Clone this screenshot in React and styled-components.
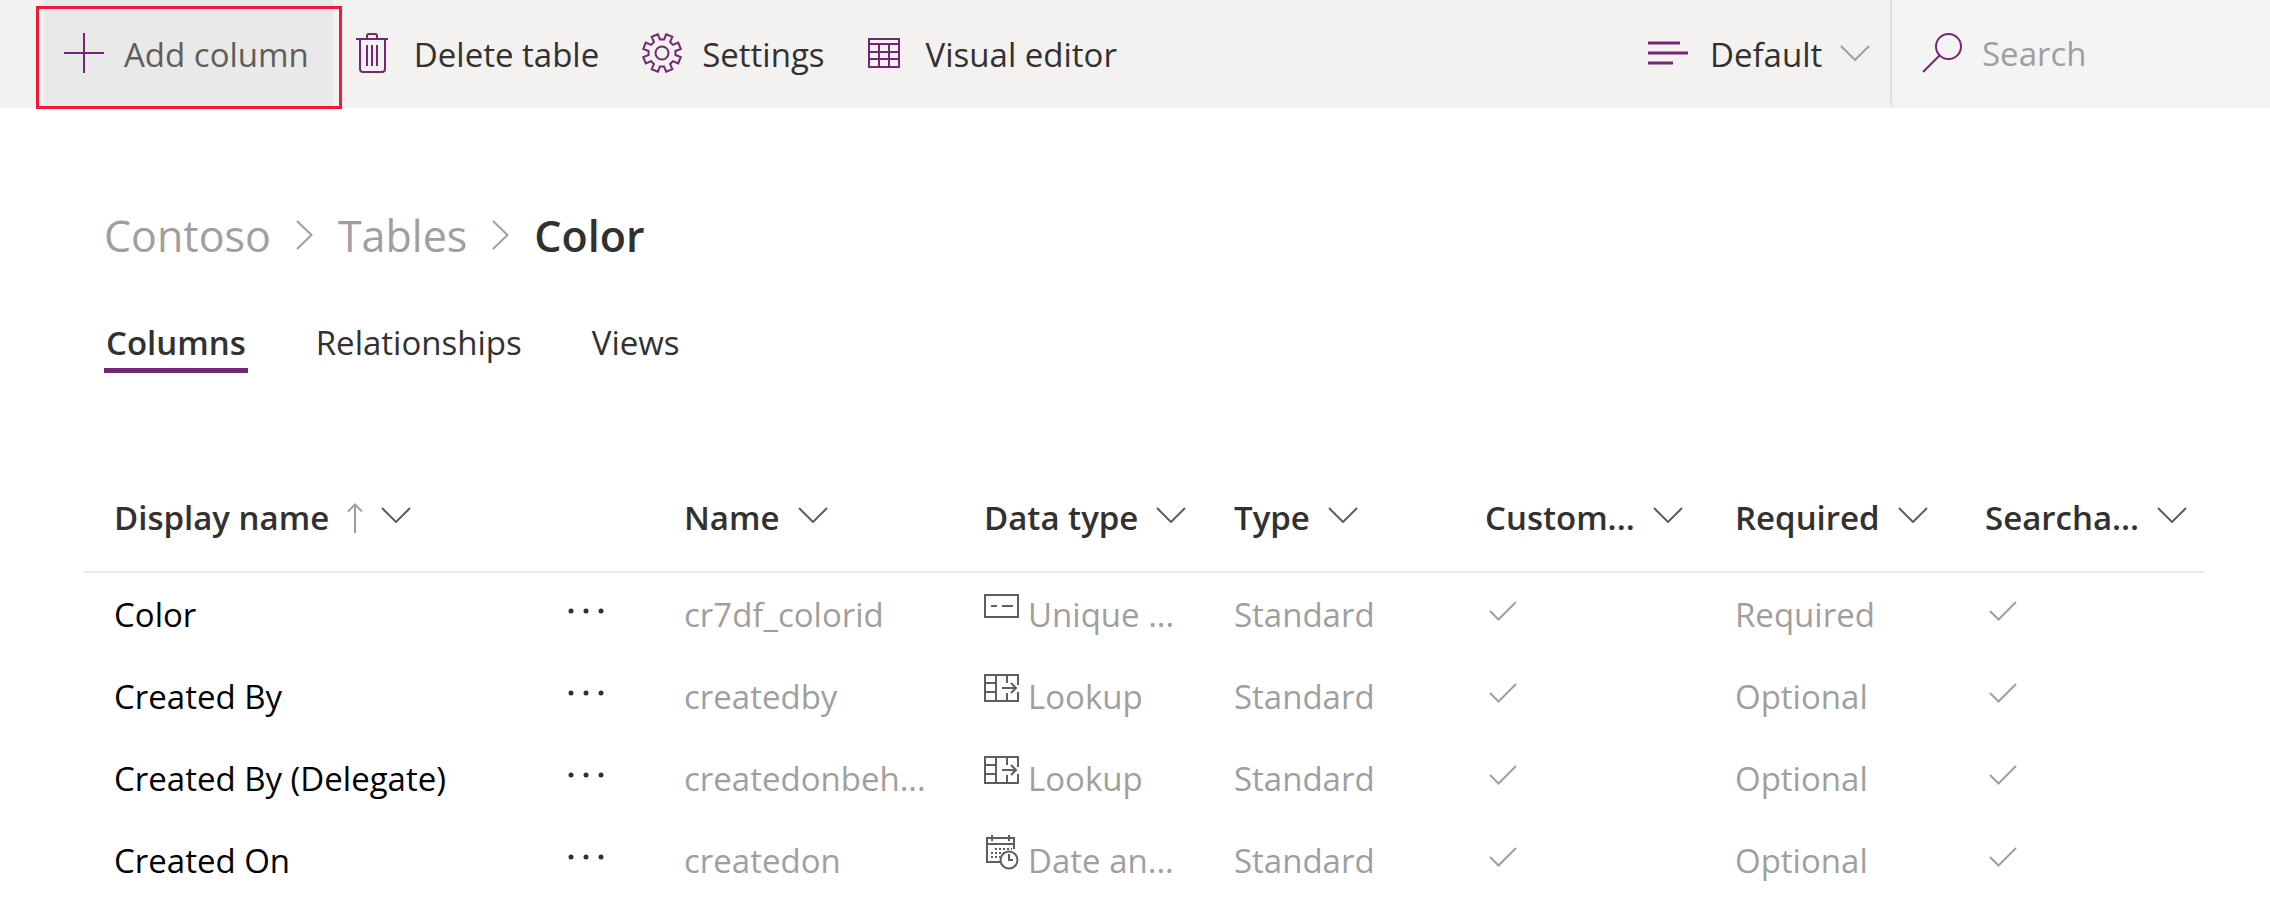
import React from "react";
import styled, { createGlobalStyle, css } from "styled-components";

const purple = "#742774";
const ink = "#323130";
const muted = "#a19f9d";

const GlobalStyle = createGlobalStyle`
  *, *::before, *::after { box-sizing: border-box; }
  body {
    margin: 0;
    background: #fff;
    color: ${ink};
    font-family: "Segoe UI", "Open Sans", "Noto Sans", sans-serif;
    font-size: 33px;
    line-height: 46px;
  }
  button, input, select { font: inherit; color: inherit; }
  svg { display: block; flex: none; }
`;

/* Icons */

const Svg = styled.svg.attrs({ "aria-hidden": true, fill: "none" })`
  stroke: ${(p) => p.$color || purple};
  stroke-width: ${(p) => p.$weight || 2}px;
  ${(p) => p.$raise && css`margin-bottom: ${p.$raise}px;`}
`;

const PlusIcon = () => (
  <Svg width="40" height="40" viewBox="0 0 40 40" $raise={4}>
    <path d="M20 0V40M0 20H40" />
  </Svg>
);

const TrashIcon = () => (
  <Svg width="32" height="40" viewBox="0 0 32 40" $raise={4}>
    <path d="M0 6H32M11 6V3Q11 1 13 1H19Q21 1 21 3V6M4 6V36Q4 39 7 39H26Q29 39 29 36V6M11 12V33M16 12V33M21 12V33" />
  </Svg>
);

const gearOutline = Array.from({ length: 8 }, (_, k) =>
  [[-14, 13.6], [-10, 19.2], [10, 19.2], [14, 13.6]]
    .map(([offset, radius]) => {
      const a = ((22.5 + 45 * k + offset) * Math.PI) / 180;
      return `${(20 + radius * Math.sin(a)).toFixed(2)},${(20 - radius * Math.cos(a)).toFixed(2)}`;
    })
    .join(" ")
).join(" ");

const GearIcon = () => (
  <Svg width="40" height="40" viewBox="0 0 40 40" $raise={4}>
    <polygon points={gearOutline} />
    <circle cx="20" cy="20" r="6.5" />
  </Svg>
);

const GridIcon = () => (
  <Svg width="32" height="30" viewBox="0 0 32 30" $raise={4}>
    <path d="M1 1H31V29H1ZM1 6H31M1 14H31M1 21H31M11 6V29M21 6V29" />
  </Svg>
);

const ViewIcon = () => (
  <Svg width="40" height="24" viewBox="0 0 40 24" $weight={3} $raise={4}>
    <path d="M0 2H32M0 12H40M0 22H25" />
  </Svg>
);

const SearchIcon = () => (
  <Svg width="40" height="40" viewBox="0 0 40 40" $raise={2}>
    <circle cx="26.500" cy="13.500" r="12.500" />
    <path d="M17.500 22.500L1 39" />
  </Svg>
);

const ChevronDown = ({ color = "#605e5c", raise }) => (
  <Svg width="30" height="16" viewBox="0 0 30 16" $color={color} $raise={raise}>
    <path d="M1 1L15 15L29 1" />
  </Svg>
);

const ChevronRight = () => (
  <Svg width="17" height="30" viewBox="0 0 17 30" $color={muted} $raise={2}>
    <path d="M1 1L15.500 15L1 29" />
  </Svg>
);

const SortUpIcon = () => (
  <Svg width="16" height="30" viewBox="0 0 16 30" $color={muted}>
    <path d="M8 30V1.500M1 8.500L8 1.500L15 8.500" />
  </Svg>
);

const MoreIcon = () => (
  <Svg width="36" height="6" viewBox="0 0 36 6" $color="none" $raise={8}>
    <g fill={ink}>
      <circle cx="3" cy="3" r="2.500" />
      <circle cx="18" cy="3" r="2.500" />
      <circle cx="33" cy="3" r="2.500" />
    </g>
  </Svg>
);

const UniqueIcon = () => (
  <Svg width="36" height="36" viewBox="0 0 36 36" $color="#605e5c" $raise={18}>
    <path d="M1 7H34V29H1ZM7 18H13M18 18H29" />
  </Svg>
);

const LookupIcon = () => (
  <Svg width="36" height="36" viewBox="0 0 36 36" $color="#605e5c" $raise={18}>
    <path d="M34 15V5H1V31H34V22M12 5V31M1 13H12M1 22H12M23 5V13M23 23V31M18 18H32M27 13L32 18L27 23" />
  </Svg>
);

const DateIcon = () => (
  <Svg width="36" height="36" viewBox="0 0 36 36" $color="#605e5c" $raise={18}>
    <path d="M17 28H3V4H30V15M3 10H30M8 1V7M25 1V7" />
    <path d="M11 15H28M7 19H20M7 23H16" strokeDasharray="2 2" />
    <circle cx="25" cy="26" r="8.500" />
    <path d="M25 20V26H29" />
  </Svg>
);

const CheckIcon = () => (
  <Svg width="28" height="20" viewBox="0 0 28 20" $color={muted} $raise={8}>
    <path d="M1 10L9.500 18.500L27 1" />
  </Svg>
);

/* Command bar */

const CommandBar = styled.header`
  display: flex;
  height: 108px;
  padding-left: 44px;
  background: #f3f2f1;
`;

const CommandButton = styled.button`
  position: relative;
  display: flex;
  align-items: center;
  gap: ${(p) => p.$gap || 20}px;
  padding: 2px ${(p) => (p.$hovered ? 24 : 20)}px 0 20px;
  border: 0;
  background: ${(p) => (p.$hovered ? "#e9e9e9" : "transparent")};
  color: ${(p) => (p.$hovered ? "#605e5c" : ink)};
  white-space: nowrap;
`;

const Callout = styled.span`
  position: absolute;
  inset: 6px -9px -1px -8px;
  border: 3px solid #f01a36;
  pointer-events: none;
`;

const Commands = styled.div`
  display: flex;
  flex: 1;
  gap: 3px;
`;

const ViewPicker = styled.label`
  display: flex;
  align-items: center;
  padding: 2px 20px 0 0;
`;

const ViewSelect = styled.select`
  appearance: none;
  width: 182px;
  margin: 0 -30px 0 0;
  padding: 0 40px 0 22px;
  border: 0;
  background: transparent;
`;

const PickerArrow = styled.span`
  pointer-events: none;
`;

const SearchBox = styled.label`
  display: flex;
  align-items: center;
  gap: 20px;
  width: 380px;
  padding-left: 30px;
  border-left: 2px solid #e1dfdd;
  border-bottom-left-radius: 6px;
  background: #f4f4f4;
`;

const SearchInput = styled.input`
  min-width: 0;
  flex: 1;
  padding: 0;
  border: 0;
  outline: 0;
  background: transparent;
  &::placeholder { color: ${muted}; opacity: 1; }
`;

/* Page heading */

const Page = styled.main`
  padding: 98px 65px 0 84px;
`;

const Breadcrumb = styled.nav`
  display: flex;
  align-items: center;
  gap: 25px;
  padding-left: 20px;
  font-size: 43px;
  line-height: 60px;
`;

const Crumb = styled.a`
  color: ${muted};
  text-decoration: none;
`;

const CurrentCrumb = styled.h1`
  margin: 0;
  font-size: inherit;
  font-weight: 600;
`;

const Tabs = styled.div`
  display: flex;
  gap: 66px;
  margin-top: 50px;
  padding-left: 20px;
`;

const Tab = styled.button`
  padding: 4px 2px 2px;
  border: 0;
  border-bottom: 5px solid ${(p) => (p["aria-selected"] ? purple : "transparent")};
  background: transparent;
  font-weight: ${(p) => (p["aria-selected"] ? 600 : 400)};
`;

/* Columns table */

const Table = styled.table`
  width: 100%;
  margin-top: 90px;
  border-collapse: separate;
  border-spacing: 0;
  table-layout: fixed;
`;

const Col = styled.col`
  width: ${(p) => (p.$width ? `${p.$width}px` : "auto")};
`;

const HeadCell = styled.th`
  height: 110px;
  padding: 2px 0 0;
  padding-left: ${(p) => (p.$first ? 30 : 0)}px;
  border-bottom: 2px solid #eaeaea;
  text-align: left;
`;

const HeadButton = styled.button`
  display: flex;
  align-items: center;
  gap: 18px;
  padding: 0;
  border: 0;
  background: transparent;
  font-weight: 600;
  white-space: nowrap;
`;

const Cell = styled.td`
  height: 82px;
  padding: 2px 0 0;
  color: ${muted};
  white-space: nowrap;
`;

const NameCell = styled.th`
  padding: 2px 80px 0 30px;
  color: #000;
  font-weight: 400;
  text-align: left;
`;

const CellContent = styled.div`
  display: flex;
  align-items: center;
  justify-content: ${(p) => (p.$spread ? "space-between" : "flex-start")};
  gap: 8px;
  padding-left: ${(p) => p.$indent || 0}px;
`;

const MoreButton = styled.button`
  padding: 16px 0;
  border: 0;
  background: transparent;
`;

const columns = [
  { label: "Display name", sorted: true },
  { label: "Name", width: 300 },
  { label: "Data type", width: 250 },
  { label: "Type", width: 251 },
  { label: "Custom...", width: 250 },
  { label: "Required", width: 250 },
  { label: "Searcha...", width: 220 },
];

const rows = [
  { display: "Color", name: "cr7df_colorid", icon: <UniqueIcon />, dataType: "Unique ...", required: "Required" },
  { display: "Created By", name: "createdby", icon: <LookupIcon />, dataType: "Lookup", required: "Optional" },
  { display: "Created By (Delegate)", name: "createdonbeh...", icon: <LookupIcon />, dataType: "Lookup", required: "Optional" },
  { display: "Created On", name: "createdon", icon: <DateIcon />, dataType: "Date an...", required: "Optional" },
];

export default function App() {
  return (
    <>
      <GlobalStyle />
      <CommandBar>
        <Commands>
          <CommandButton type="button" $hovered>
            <PlusIcon />
            Add column
            <Callout />
          </CommandButton>
          <CommandButton type="button" $gap={26}>
            <TrashIcon />
            Delete table
          </CommandButton>
          <CommandButton type="button">
            <GearIcon />
            Settings
          </CommandButton>
          <CommandButton type="button" $gap={26}>
            <GridIcon />
            Visual editor
          </CommandButton>
        </Commands>
        <ViewPicker>
          <ViewIcon />
          <ViewSelect aria-label="View" defaultValue="Default">
            <option>Default</option>
          </ViewSelect>
          <PickerArrow>
            <ChevronDown color={muted} raise={4} />
          </PickerArrow>
        </ViewPicker>
        <SearchBox>
          <SearchIcon />
          <SearchInput type="search" placeholder="Search" aria-label="Search" />
        </SearchBox>
      </CommandBar>

      <Page>
        <Breadcrumb aria-label="Breadcrumb">
          <Crumb href="#contoso">Contoso</Crumb>
          <ChevronRight />
          <Crumb href="#tables">Tables</Crumb>
          <ChevronRight />
          <CurrentCrumb>Color</CurrentCrumb>
        </Breadcrumb>

        <Tabs role="tablist">
          <Tab type="button" role="tab" aria-selected={true}>Columns</Tab>
          <Tab type="button" role="tab" aria-selected={false}>Relationships</Tab>
          <Tab type="button" role="tab" aria-selected={false}>Views</Tab>
        </Tabs>

        <Table>
          <colgroup>
            {columns.map((c) => <Col key={c.label} $width={c.width} />)}
          </colgroup>
          <thead>
            <tr>
              {columns.map((c, i) => (
                <HeadCell key={c.label} scope="col" $first={i === 0} aria-sort={c.sorted ? "ascending" : undefined}>
                  <HeadButton type="button">
                    {c.label}
                    {c.sorted && <SortUpIcon />}
                    <ChevronDown raise={6} />
                  </HeadButton>
                </HeadCell>
              ))}
            </tr>
          </thead>
          <tbody>
            {rows.map((r) => (
              <tr key={r.display}>
                <NameCell scope="row">
                  <CellContent $spread>
                    {r.display}
                    <MoreButton type="button" aria-label={`More actions for ${r.display}`}>
                      <MoreIcon />
                    </MoreButton>
                  </CellContent>
                </NameCell>
                <Cell>{r.name}</Cell>
                <Cell>
                  <CellContent>
                    {r.icon}
                    {r.dataType}
                  </CellContent>
                </Cell>
                <Cell>Standard</Cell>
                <Cell><CellContent $indent={4}><CheckIcon /></CellContent></Cell>
                <Cell>{r.required}</Cell>
                <Cell><CellContent $indent={4}><CheckIcon /></CellContent></Cell>
              </tr>
            ))}
          </tbody>
        </Table>
      </Page>
    </>
  );
}
